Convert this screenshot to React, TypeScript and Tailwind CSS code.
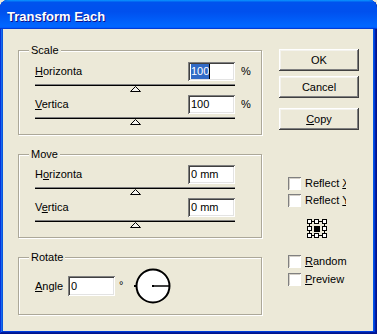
import React from "react";

const font = "font-['Liberation_Sans',Arial,sans-serif]";

const Slider = () => (
  <div className="h-[14px] w-[200px] shrink-0">
    <div className="mt-[3px] h-[2px] border-t border-t-[#808080] border-b border-b-black" />
    <div className="flex justify-center h-[6px]">
      <svg width="11" height="6" viewBox="0 0 11 6">
        <polygon points="0.5,5.5 5.5,0.5 10.5,5.5" fill="#f4f3ee" stroke="#000" strokeWidth="1" />
      </svg>
    </div>
  </div>
);

const sunken =
  "bg-white shadow-[inset_1px_1px_#808080,inset_-1px_-1px_#fff,inset_2px_2px_#404040,inset_-2px_-2px_#e3e3e3]";

const Input = ({ children, w = "w-[47px]", h = "h-[19px]" }: { children: React.ReactNode; w?: string; h?: string }) => (
  <div className={`${w} ${h} ${sunken} flex items-center pl-[3px] text-[11px] leading-[13px] text-black`}>{children}</div>
);

const Row = ({ label, value, unit }: { label: React.ReactNode; value: React.ReactNode; unit?: string }) => (
  <div className="flex items-center h-[19px] shrink-0">
    <div className="w-[153px] text-[11px] leading-[13px]">{label}</div>
    <Input>{value}</Input>
    {unit && <div className="ml-[6px] text-[11px] leading-[13px]">{unit}</div>}
  </div>
);

const Group = ({ title, children, className = "" }: { title: string; children: React.ReactNode; className?: string }) => (
  <div className={`relative shrink-0 border border-[#aca899] shadow-[inset_1px_1px_#fff,1px_1px_#fff] ${className}`}>
    <div className="absolute left-[10px] -top-[7px] px-[2px] text-[11px] leading-[13px] bg-[#ece9d8]">{title}</div>
    {children}
  </div>
);

const Button = ({ children, className = "" }: { children: React.ReactNode; className?: string }) => (
  <div
    className={`w-[80px] h-[22px] shrink-0 flex items-center justify-center text-[11px] leading-[13px] bg-[#ece9d8] shadow-[inset_-1px_-1px_#404040,inset_1px_1px_#fff,inset_-2px_-2px_#808080,inset_2px_2px_#f4f3ee] ${className}`}
  >
    {children}
  </div>
);

const Check = ({ children, className = "" }: { children: React.ReactNode; className?: string }) => (
  <div className={`flex items-center h-[13px] shrink-0 ${className}`}>
    <div className="w-[13px] h-[13px] bg-white shadow-[inset_1px_1px_#808080,inset_-1px_-1px_#fff,inset_2px_2px_#d4d0c8]" />
    <span className="ml-[4px] text-[11px] leading-[13px] whitespace-nowrap">{children}</span>
  </div>
);

const HalfLetter = ({ c }: { c: string }) => (
  <span className="inline-block w-[4px] overflow-hidden align-top underline">{c}</span>
);

export default function App() {
  return (
    <div className={`w-[377px] h-[334px] bg-[#ece9d8] ${font} text-black`}>
      <div className="w-[377px] h-[334px] flex flex-col rounded-t-[8px] overflow-hidden bg-[#0055e5] shadow-[inset_-1px_-1px_#00138c,inset_1px_1px_#0831d9,inset_-2px_-2px_#001ea0,inset_2px_2px_#166aee,inset_-3px_-3px_#003bda,inset_3px_3px_#0855dd]">
        {/* Title bar */}
        <div className="h-[29px] shrink-0 pl-[7px] pt-[9px] bg-[linear-gradient(180deg,#0997ff,#0053ee_8%,#0050ee_40%,#06f_88%,#06f_93%,#005bff_95%,#003dd7_96%,#003dd7)]">
          <div className="text-[13px] leading-[15px] font-bold text-white [text-shadow:1px_1px_#0f1089]">Transform Each</div>
        </div>
        {/* Body */}
        <div className="h-[302px] shrink-0 ml-[3px] mr-[4px] bg-[#ece9d8] flex items-start pl-[15px]">
          {/* Left column */}
          <div className="w-[244px] pt-[21px] flex flex-col">
            <Group title="Scale" className="h-[85px]">
              <div className="pl-[16px] pt-[11px] flex flex-col">
                <Row
                  label={<><span className="underline">H</span>orizonta</>}
                  value={
                    <span className="flex items-center h-[15px]">
                      <span className="bg-[#316ac5] text-white leading-[15px]">100</span>
                      <span className="w-[1px] h-[15px] bg-black" />
                    </span>
                  }
                  unit="%"
                />
                <Slider />
                <Row label={<><span className="underline">V</span>ertica</>} value="100" unit="%" />
                <Slider />
              </div>
            </Group>
            <Group title="Move" className="mt-[19px] h-[84px]">
              <div className="pl-[16px] pt-[10px] flex flex-col">
                <Row label={<>H<span className="underline">o</span>rizonta</>} value="0 mm" />
                <Slider />
                <Row label={<>V<span className="underline">e</span>rtica</>} value="0 mm" />
                <Slider />
              </div>
            </Group>
            <Group title="Rotate" className="mt-[19px] h-[58px]">
              <div className="pl-[16px] pt-[11px]">
                <div className="flex items-center h-[34px]">
                  <div className="w-[33px] text-[11px] leading-[13px]">
                    <span className="underline">A</span>ngle
                  </div>
                  <Input h="h-[20px]">0</Input>
                  <div className="ml-[4px] self-start mt-[10px] text-[11px] leading-[13px] w-[16px]">°</div>
                  <svg width="38" height="36" viewBox="0 0 38 36" className="-ml-[1px]">
                    <circle cx="19" cy="18" r="16.5" fill="#fff" stroke="#000" strokeWidth="2" />
                    <line x1="19" y1="18" x2="35" y2="18" stroke="#000" strokeWidth="1.5" />
                    <rect x="18" y="17" width="2" height="2" fill="#000" />
                    <rect x="0" y="17" width="2" height="2" fill="#000" />
                  </svg>
                </div>
              </div>
            </Group>
          </div>
          {/* Right column */}
          <div className="ml-[17px] w-[80px] pt-[20px] flex flex-col">
            <Button>OK</Button>
            <Button className="mt-[5px]">Cancel</Button>
            <Button className="mt-[10px]">
              <span><span className="underline">C</span>opy</span>
            </Button>
            <Check className="ml-[9px] mt-[47px]">
              Reflect <HalfLetter c="X" />
            </Check>
            <Check className="ml-[9px] mt-[4px]">
              Reflect <HalfLetter c="Y" />
            </Check>
            <svg width="20" height="19" viewBox="0 0 20 19" className="ml-[28px] mt-[12px] shrink-0">
              <g stroke="#000" strokeWidth="1" fill="#fff" shapeRendering="crispEdges">
                <line x1="5" y1="2.5" x2="15" y2="2.5" />
                <line x1="5" y1="16.5" x2="15" y2="16.5" />
                <line x1="2.5" y1="5" x2="2.5" y2="14" />
                <line x1="17.5" y1="5" x2="17.5" y2="14" />
                <rect x="0.5" y="0.5" width="4" height="4" />
                <rect x="7.5" y="0.5" width="4" height="4" />
                <rect x="15.5" y="0.5" width="4" height="4" />
                <rect x="0.5" y="7.5" width="4" height="4" />
                <rect x="15.5" y="7.5" width="4" height="4" />
                <rect x="0.5" y="14.5" width="4" height="4" />
                <rect x="7.5" y="14.5" width="4" height="4" />
                <rect x="15.5" y="14.5" width="4" height="4" />
                <rect x="7" y="7" width="6" height="6" fill="#000" stroke="none" />
              </g>
            </svg>
            <Check className="ml-[9px] mt-[17px]">
              <span className="underline">R</span>andom
            </Check>
            <Check className="ml-[9px] mt-[5px]">
              <span className="underline">P</span>review
            </Check>
          </div>
        </div>
      </div>
    </div>
  );
}
